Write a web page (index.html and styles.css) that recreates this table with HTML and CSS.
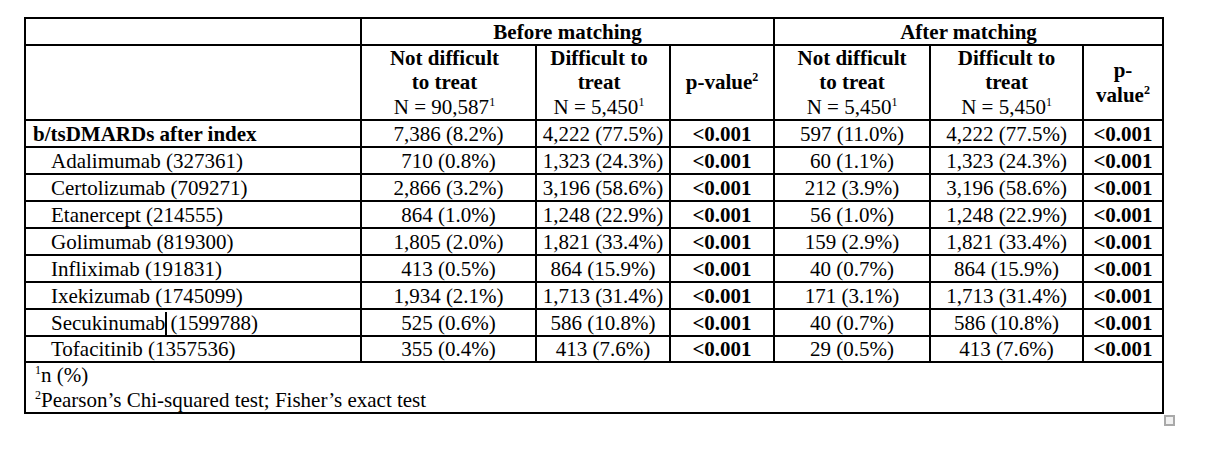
FILE: index.html
```html
<!DOCTYPE html>
<html lang="en">
<head>
<meta charset="utf-8">
<title>b/tsDMARDs after index</title>
<link rel="stylesheet" href="styles.css">
</head>
<body>
<div class="page">
  <table class="t">
    <colgroup>
      <col class="c-label">
      <col class="c-n1">
      <col class="c-d1">
      <col class="c-p1">
      <col class="c-n2">
      <col class="c-d2">
      <col class="c-p2">
    </colgroup>
    <thead>
      <tr class="h1">
        <th></th>
        <th colspan="3">Before matching</th>
        <th colspan="3">After matching</th>
      </tr>
      <tr class="h2">
        <th></th>
        <th class="b">Not difficult<br>to treat<br><span class="n">N = 90,587<sup>1</sup></span></th>
        <th class="b">Difficult to<br>treat<br><span class="n">N = 5,450<sup>1</sup></span></th>
        <th>p-value<sup>2</sup></th>
        <th>Not difficult<br>to treat<br><span class="n">N = 5,450<sup>1</sup></span></th>
        <th>Difficult to<br>treat<br><span class="n">N = 5,450<sup>1</sup></span></th>
        <th>p-<br>value<sup>2</sup></th>
      </tr>
    </thead>
    <tbody>
      <tr>
        <td class="lbl grp">b/tsDMARDs after index</td>
        <td>7,386 (8.2%)</td><td>4,222 (77.5%)</td><td class="p">&lt;0.001</td>
        <td>597 (11.0%)</td><td>4,222 (77.5%)</td><td class="p">&lt;0.001</td>
      </tr>
      <tr>
        <td class="lbl">Adalimumab (327361)</td>
        <td>710 (0.8%)</td><td>1,323 (24.3%)</td><td class="p">&lt;0.001</td>
        <td>60 (1.1%)</td><td>1,323 (24.3%)</td><td class="p">&lt;0.001</td>
      </tr>
      <tr>
        <td class="lbl">Certolizumab (709271)</td>
        <td>2,866 (3.2%)</td><td>3,196 (58.6%)</td><td class="p">&lt;0.001</td>
        <td>212 (3.9%)</td><td>3,196 (58.6%)</td><td class="p">&lt;0.001</td>
      </tr>
      <tr>
        <td class="lbl">Etanercept (214555)</td>
        <td>864 (1.0%)</td><td>1,248 (22.9%)</td><td class="p">&lt;0.001</td>
        <td>56 (1.0%)</td><td>1,248 (22.9%)</td><td class="p">&lt;0.001</td>
      </tr>
      <tr>
        <td class="lbl">Golimumab (819300)</td>
        <td>1,805 (2.0%)</td><td>1,821 (33.4%)</td><td class="p">&lt;0.001</td>
        <td>159 (2.9%)</td><td>1,821 (33.4%)</td><td class="p">&lt;0.001</td>
      </tr>
      <tr>
        <td class="lbl">Infliximab (191831)</td>
        <td>413 (0.5%)</td><td>864 (15.9%)</td><td class="p">&lt;0.001</td>
        <td>40 (0.7%)</td><td>864 (15.9%)</td><td class="p">&lt;0.001</td>
      </tr>
      <tr>
        <td class="lbl">Ixekizumab (1745099)</td>
        <td>1,934 (2.1%)</td><td>1,713 (31.4%)</td><td class="p">&lt;0.001</td>
        <td>171 (3.1%)</td><td>1,713 (31.4%)</td><td class="p">&lt;0.001</td>
      </tr>
      <tr>
        <td class="lbl">Secukinumab<span class="caret"></span> (1599788)</td>
        <td>525 (0.6%)</td><td>586 (10.8%)</td><td class="p">&lt;0.001</td>
        <td>40 (0.7%)</td><td>586 (10.8%)</td><td class="p">&lt;0.001</td>
      </tr>
      <tr class="last">
        <td class="lbl">Tofacitinib (1357536)</td>
        <td>355 (0.4%)</td><td>413 (7.6%)</td><td class="p">&lt;0.001</td>
        <td>29 (0.5%)</td><td>413 (7.6%)</td><td class="p">&lt;0.001</td>
      </tr>
    </tbody>
    <tfoot>
      <tr>
        <td class="foot" colspan="7"><sup>1</sup>n (%)<br><sup>2</sup>Pearson’s Chi-squared test; Fisher’s exact test</td>
      </tr>
    </tfoot>
  </table>
  <div class="handle"></div>
</div>
</body>
</html>
```

FILE: styles.css
```css
html, body {
  margin: 0;
  padding: 0;
  background: #ffffff;
}

body {
  font-family: "Liberation Serif", "Times New Roman", serif;
  font-size: 21px;
  color: #000000;
  min-height: 474px;
}

.page {
  position: relative;
  padding: 17px 0 0 24px;
  min-height: 440px;
}

.t {
  border-collapse: separate;
  border-spacing: 0;
  table-layout: fixed;
  width: 1140px;
  border-left: 2px solid #000;
  border-top: 2px solid #000;
}

.c-label { width: 336px; }
.c-n1 { width: 175px; }
.c-d1 { width: 134px; }
.c-p1 { width: 104px; }
.c-n2 { width: 156px; }
.c-d2 { width: 153px; }
.c-p2 { width: 80px; }

.t th,
.t td {
  box-sizing: border-box;
  border-right: 2px solid #000;
  border-bottom: 2px solid #000;
  padding: 0;
  text-align: center;
  vertical-align: middle;
  line-height: 24px;
  white-space: nowrap;
}

.t th.b {
  padding-right: 8px;
}

.t th {
  font-weight: bold;
}

.h1 th { height: 27px; }
.h2 th { height: 75px; line-height: 24.3px; }

.t th .n {
  font-weight: normal;
}

.t sup {
  font-size: 12px;
  line-height: 0;
  vertical-align: 8px;
}

tbody td { height: 27px; }
tbody tr.last td { height: 26px; }

.t td.lbl {
  text-align: left;
  padding-left: 25px;
}

.t td.grp {
  padding-left: 7px;
  font-weight: bold;
}

.t td.p {
  font-weight: bold;
}

.caret {
  display: inline-block;
  width: 2px;
  height: 23px;
  margin-right: -2px;
  background: #000;
  vertical-align: -5px;
}

.t td.foot {
  height: 51px;
  text-align: left;
  vertical-align: top;
  padding-left: 9px;
  line-height: 24.5px;
}

.handle {
  position: absolute;
  left: 1164px;
  top: 415px;
  width: 11px;
  height: 11px;
  box-sizing: border-box;
  border: 2px solid #a9a9a9;
  background: #f1f1f1;
}
```
